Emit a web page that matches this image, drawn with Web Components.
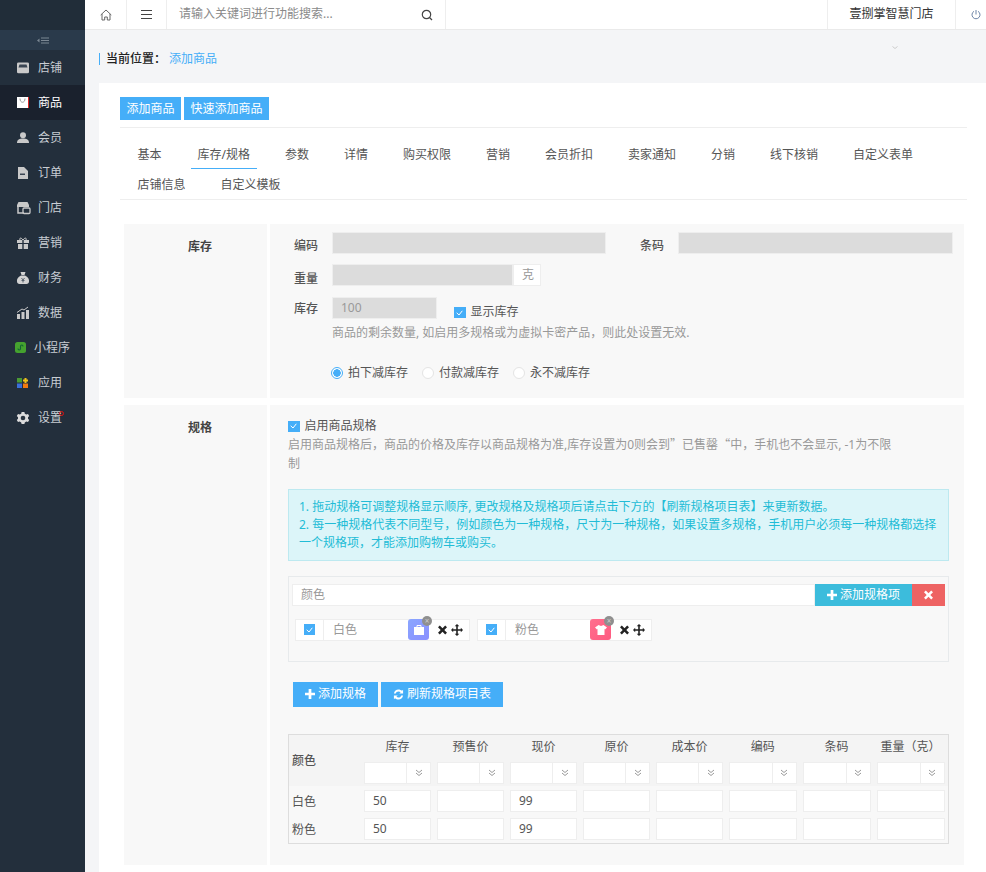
<!DOCTYPE html>
<html lang="zh"><head><meta charset="utf-8"><title>添加商品</title>
<style>
html,body{margin:0;height:872px;overflow:hidden;background:#f4f5f7}
body{font:12px/1.4 "Noto Sans","Noto Sans CJK SC",sans-serif;color:#555}
</style></head><body>
<app-shell></app-shell>
<script>
const ICONS={
shop:'<path fill="#c9c9c9" d="M1.500 0h9A1.500 1.500 0 0 1 12 1.500v9a1.500 1.500 0 0 1-1.500 1.500h-9A1.500 1.500 0 0 1 0 10.500v-9A1.500 1.500 0 0 1 1.500 0z" transform="translate(0 .5) scale(1 .9)"/><path fill="#3a4552" d="M2.500 2.500h7l1 3h-9z"/>',
goods:'<path fill="#fff" d="M0 0h11v11H0z"/><path fill="#d22" d="M11 0h1v11h-1z"/><path fill="none" stroke="#999" d="M3 1.500c0 5 5 5 5 0"/>',
user:'<circle cx="6" cy="3.200" r="3" fill="#c9c9c9"/><path fill="#c9c9c9" d="M0 11c0-3.500 2.500-4.500 6-4.500S12 7.500 12 11z"/>',
order:'<path fill="#c9c9c9" d="M1 0h6l4 4v8H1z"/><path fill="#3a4552" d="M3 6.500h5V8H3z"/>',
store:'<path fill="#c9c9c9" d="M1.500 0h9L12 3v2H0V3z"/><path fill="none" stroke="#c9c9c9" stroke-width="1.500" d="M1 5v6h6"/><rect x="6" y="6" width="7" height="5.500" rx="1" fill="none" stroke="#c9c9c9" stroke-width="1.300"/>',
gift:'<path fill="#c9c9c9" d="M0 3h5.300v3H0zM6.700 3H12v3H6.700zM1 7h4.300v5H1zM6.700 7H11v5H6.700z"/><path fill="none" stroke="#c9c9c9" d="M6 3C4 0 2 1 3 3M6 3c2-3 4-2 3 0"/>',
money:'<path fill="#d2d2d2" d="M3.500 0h5L7.500 3h-3zM4 3.500h4c3 1.500 4.500 4 4 6 0 1.500-1 2.500-2.500 2.500h-7C1 12 0 11 0 9.500-.5 7.500 1 5 4 3.500z"/><path fill="none" stroke="#56616c" d="M4.500 6 6 8l1.500-2M6 8v2.500M4.500 8.500h3"/>',
data:'<path fill="#c9c9c9" d="M0 7h3v5H0zM4.500 5h3v7h-3zM9 3h3v9H9z"/><path fill="none" stroke="#c9c9c9" d="M0 5.500 5 2l2 1 4-3"/>',
mini:'<rect width="11" height="11" rx="2.500" fill="#45a22f"/><path fill="none" stroke="#163" stroke-width="1.100" d="M3 6.500c0 2 2.500 2 2.500 0v-2c0-2 2.500-2 2.500 0"/>',
apps:'<rect x="0" y="1" width="5" height="4.500" fill="#4a9a35"/><path fill="#f2c21a" d="M7.500 1h2v1.500H11v2H9.500V6h-2V4.500H6v-2h1.500z"/><rect x="0" y="6.500" width="5" height="4.500" fill="#3b6fd8"/><rect x="6" y="6.500" width="5" height="4.500" fill="#f07a10"/>',
gear:'<path fill="#dcdcdc" d="M4.600 0h2.800l.4 1.700 1.500.8 1.700-.5 1.200 2.100-1.200 1.200v1.400L12.200 8 11 10l-1.700-.5-1.500.9-.4 1.600H4.600l-.4-1.600-1.500-.9L1 10-.2 8 1 6.700V5.300L-.2 4.100 1 2l1.700.5 1.500-.8z"/><circle cx="6" cy="6" r="2.300" fill="#2a3540"/>',
plus:'<path fill="currentColor" d="M4 0h3v4h4v3H7v4H4V7H0V4h4z"/>',
times:'<path fill="currentColor" d="M2 .5 5 3.500 8 .5 10 2.500 7 5.500 10 8.500 8 10.500 5 7.500 2 10.500 0 8.500 3 5.500 0 2.500z"/>',
arrows:'<path fill="currentColor" d="M6 0l2.300 2.300H6.800v3h3V3.800L12 6l-2.200 2.200V6.800h-3v3h1.500L6 12 3.700 9.800h1.500v-3h-3v1.400L0 6l2.200-2.200v1.500h3v-3H3.700z"/>',
refresh:'<path fill="currentColor" d="M1 5C1.500 2 3.500 .5 6 .5c1.500 0 2.800.6 3.800 1.500L11 .8V5H6.800l1.500-1.500C7.700 3 6.900 2.700 6 2.700 4.500 2.700 3.300 3.600 3 5zM11 7c-.5 3-2.500 4.500-5 4.500-1.500 0-2.800-.6-3.800-1.500L1 11.200V7h4.200l-1.500 1.500c.6.500 1.400.8 2.300.8 1.500 0 2.700-.9 3-2.300z"/>'
};
const svg=(n,w=12,h=12,vb='0 0 12 12')=>`<svg width="${w}" height="${h}" viewBox="${vb}" aria-hidden="true" style="display:block;flex:none;overflow:visible">${ICONS[n]}</svg>`;
function def(tag,css,html){
  customElements.define(tag,class extends HTMLElement{
    constructor(){super();this.attachShadow({mode:'open'});}
    connectedCallback(){const h=typeof html==='function'?html(this):html;this.shadowRoot.innerHTML=`<style>${css}</style>${h}`;}
  });
}
def('nav-item',`
:host{display:flex;align-items:center;height:35px;box-sizing:border-box;padding:1px 0 0 17px;color:#c8cdd3;font-size:12px}
:host([active]){background:#1a212d;color:#fff}
:host([tight]){padding-left:15px}
.l{margin-left:9px;position:relative;top:.5px}
:host([tight]) .l{margin-left:7px}
:host([dot]) .l::after{content:"";position:absolute;right:-2px;top:1px;width:3px;height:3px;border:1px solid #e01010;border-radius:50%}
`,e=>`${svg(e.getAttribute('icon'))}<span class="l"><slot></slot></span>`);
def('app-sidebar',`
:host{display:block;width:85px;flex:none;background:#232f3c;height:872px}
.t{height:30px;background:#212d39}
.c{height:20px;background:#2a3a4b;display:flex;align-items:center;justify-content:center}
`,`<div class="t"></div><div class="c"><svg width="12" height="7" viewBox="0 0 12 7"><path fill="#7b8793" d="M0 3.500 2.500 1.500v4zM4 .5h8v1H4zM4 3h8v1H4zM4 5.500h8v1H4z"/></svg></div>
<nav-item icon="shop">店铺</nav-item><nav-item icon="goods" active>商品</nav-item><nav-item icon="user">会员</nav-item><nav-item icon="order">订单</nav-item><nav-item icon="store">门店</nav-item><nav-item icon="gift">营销</nav-item><nav-item icon="money">财务</nav-item><nav-item icon="data">数据</nav-item><nav-item icon="mini" tight>小程序</nav-item><nav-item icon="apps">应用</nav-item><nav-item icon="gear" dot>设置</nav-item>`);
def('app-topbar',`
:host{display:flex;height:29px;background:#fff;border-bottom:1px solid #eaeaea;align-items:stretch;color:#555}
.b{display:flex;align-items:center;justify-content:center;border-right:1px solid #eee;box-sizing:content-box}
.home{width:41px}.menu{width:39px}
.s{width:254px;padding:0 12px;justify-content:space-between;color:#8a8a8a;font-size:12px;border-right:1px solid #eee}
.sp{flex:1;border-right:1px solid #eee}
.store{width:127px;color:#333;font-size:12px;border-right:1px solid #eee}
.p{width:30px;flex:none;display:flex;align-items:center;justify-content:center;padding-left:10px;box-sizing:border-box}
`,`<div class="b home"><svg width="12" height="12" viewBox="0 0 12 12" fill="none" stroke="#666"><path d="M.7 6 6 1l5.300 5M2 5v6h2.700V8h2.600v3H10V5"/></svg></div>
<div class="b menu"><svg width="11" height="9" viewBox="0 0 11 9"><path stroke="#444" d="M0 .5h11M0 4.500h11M0 8.500h11"/></svg></div>
<div class="b s"><span>请输入关键词进行功能搜索...</span><svg width="12" height="12" viewBox="0 0 12 12" fill="none" stroke="#444" stroke-width="1.200"><circle cx="5.500" cy="5.500" r="4.200"/><path d="M8.500 8.500 11 11"/></svg></div>
<div class="sp"></div><div class="b store">壹捌掌智慧门店</div>
<div class="p"><svg width="10" height="10" viewBox="0 0 10 10" fill="none" stroke="#6f86a8"><path d="M3 1.300a4 4 0 1 0 4 0M5 0v4.500"/></svg></div>`);
def('app-crumb',`
:host{display:flex;height:53px;box-sizing:border-box;align-items:center;padding:5px 0 0 14px;font-size:12px;color:#333;position:relative}
.bar{width:1px;height:12px;background:#45aef8;margin-right:6px}
b{font-weight:500;color:#222}
a{color:#45aef8;margin-left:3px}
svg{position:absolute;left:807px;top:16px}
`,`<span class="bar"></span><b>当前位置：</b><a>添加商品</a><svg width="6" height="3" viewBox="0 0 6 3"><path fill="none" stroke="#bbb" stroke-width=".7" d="M.5.500 3 2.500 5.500.5"/></svg>`);
def('x-btn',`
:host{display:inline-flex;align-items:center;justify-content:center;height:var(--h,23px);padding:1px 6.500px 0;background:var(--bg,#45aef8);color:#fff;font-size:12px;box-sizing:border-box;gap:3px;white-space:nowrap}
.i{display:flex;width:var(--iw,10px);justify-content:center;margin-top:-1px}
`,e=>{const n=e.getAttribute('icon');return `${n?`<span class="i">${n==='plus'?svg('plus',10,10,'0 0 11 11'):n==='refresh'?svg('refresh',11,11):svg('times',9,10,'0 0 10 11')}</span>`:''}<slot></slot>`});
def('x-tab',`
:host{display:block;height:30px;line-height:31px;padding:0 7px;margin:0 10.500px;box-sizing:border-box;color:#555;font-size:12px;white-space:nowrap}
:host([on]){border-bottom:1px solid #45aef8}
`,`<slot></slot>`);
def('x-tabs',`
:host{display:flex;flex-wrap:wrap;border-bottom:1px solid #eee;margin-top:11px;height:61px;box-sizing:border-box}
`,`<slot></slot>`);
def('x-section',`
:host{display:flex;margin:0 3px 7px 4px;gap:3px}
.l{width:143px;flex:none;background:#f8f8f8;text-align:center;font-weight:700;color:#444;font-size:12px;padding:var(--lt,14px) 0 0 9px;box-sizing:border-box}
.r{flex:1;background:#f8f8f8;min-width:0}
`,e=>`<div class="l">${e.getAttribute('label')}</div><div class="r"><slot></slot></div>`);
def('x-row',`
:host{display:flex;align-items:center;height:22px;margin-top:var(--mt,0);font-size:12px}
`,`<slot></slot>`);
def('x-label',`
:host{display:block;text-align:right;margin-right:14px;font-weight:500;color:#555;flex:none;width:var(--w,48px);padding-top:var(--pt,4px)}
`,`<slot></slot>`);
def('x-input',`
:host{display:block;box-sizing:border-box;height:22px;line-height:20px;border:1px solid #eee;background:var(--bg,#fff);color:var(--fg,#555);padding:0 var(--px,8px);font-size:12px;flex:none;width:var(--w,100%);white-space:nowrap;overflow:hidden}
:host([off]){background:#dcdcdc;color:#999}
`,`<slot></slot>`);
def('x-check',`
:host{display:flex;width:fit-content;align-items:center;gap:5px;font-size:12px;color:#555;flex:none}
i{display:flex;align-items:center;justify-content:center;width:11.500px;height:11.500px;background:#45aef8}
`,`<i><svg width="7" height="6" viewBox="0 0 7 6"><path fill="none" stroke="#fff" d="M.7 2.800 3 5 6.300.8"/></svg></i><slot></slot>`);
def('x-radio',`
:host{display:inline-flex;align-items:center;gap:5px;font-size:12px;color:#555;margin-right:14px}
i{display:block;box-sizing:border-box;width:12px;height:12px;border-radius:50%;border:1px solid #e4e4e4;background:#fff}
:host([on]) i{border-color:#45aef8;background:radial-gradient(circle,#45aef8 3.500px,#fff 4px)}
`,`<i></i><slot></slot>`);
def('spec-item',`
:host{display:flex;align-items:center;height:22px;box-sizing:border-box;border:1px solid #eee;background:#fff;color:#999;font-size:12px}
.c{width:27px;display:flex;justify-content:center;border-right:1px solid #eee;height:100%;align-items:center;background:#fff}
i{display:flex;align-items:center;justify-content:center;width:11px;height:11px;background:#45aef8}
.n{width:75px;padding-left:9px;line-height:20px}
.pic{width:21px;height:21px;border-radius:3px;position:relative;display:flex;align-items:center;justify-content:center}
.x{position:absolute;right:-3px;top:-3px;width:10px;height:10px;border-radius:50%;background:#8f8f8f;color:#ccc;font-size:8px;line-height:10px;text-align:center}
.a{display:flex;align-items:center;gap:4px;padding:0 6px 0 9px;color:#222}
`,e=>`<div class="c"><i><svg width="7" height="6" viewBox="0 0 7 6"><path fill="none" stroke="#fff" d="M.7 2.800 3 5 6.300.8"/></svg></i></div><div class="n">${e.getAttribute('name')}</div>
<div class="pic" style="background:${e.getAttribute('pic')}">${e.getAttribute('kind')==='bag'?'<svg width="12" height="10" viewBox="0 0 12 10"><path fill="#fff" d="M1 2h10v8H1z"/><path fill="none" stroke="#fff" d="M4 2V.5h4V2"/></svg>':'<svg width="12" height="10" viewBox="0 0 12 10"><path fill="#fff" d="M3.500 0 6 1 8.500 0 12 2.500 10 4.500 9.500 3.800V10h-7V3.800L2 4.500 0 2.500z"/></svg>'}<span class="x">×</span></div>
<div class="a">${svg('times',9,10,'0 0 10 11')}${svg('arrows',12,12)}</div>`);
def('sku-table',`
:host{display:grid;grid-template-columns:72px 73px 73px 73px 73px 73px 73.500px 74px 74px;border:1px solid #ddd;margin-top:27px;height:110px;box-sizing:border-box;grid-template-rows:27px 24px 28px 29px;font-size:12px;color:#555;background:#f8f8f8}
.h{background:#f4f4f4;text-align:center;padding-top:3px;line-height:18px;color:#555}
.f{grid-row:span 2;text-align:left;padding:17px 0 0 3px;font-weight:500;line-height:18px}
.s{background:#f4f4f4;padding:0 3px;display:flex;align-items:flex-start}
.a{flex:1;height:22px;box-sizing:border-box;background:#fff;border:1px solid #eee;min-width:0}
.b{width:24px;height:22px;box-sizing:border-box;background:#fff;border:1px solid #eee;border-left:0;display:flex;align-items:center;justify-content:center;flex:none}
.n{padding:5px 0 0 3px;line-height:22px}
.c{padding:4px 3px 0}
.i{height:22px;box-sizing:border-box;background:#fff;border:1px solid #eee;padding-left:8px;line-height:20px;font-size:12px}
`,()=>{
 const heads=['库存','预售价','现价','原价','成本价','编码','条码','重量（克）'];
 const chev='<svg width="8" height="8" viewBox="0 0 8 8" fill="none" stroke="#999"><path d="M1 1l3 2.500L7 1M1 4l3 2.500L7 4"/></svg>';
 let h='<div class="h f">颜色</div>'+heads.map(t=>`<div class="h">${t}</div>`).join('');
 h+=heads.map(()=>`<div class="s"><div class="a"></div><div class="b">${chev}</div></div>`).join('');
 for(const n of ['白色','粉色']){
  h+=`<div class="n">${n}</div>`+heads.map((_,i)=>`<div class="c"><div class="i">${i===0?'50':i===2?'99':''}</div></div>`).join('');
 }
 return h;
});
def('stock-section',`
:host{display:block}
.w{padding:8px 11px 0 0;height:174px;box-sizing:border-box}
.help{color:#999;margin:4px 0 0 62px;line-height:19px;font-size:12px}
.radios{margin:23px 0 0 61px;display:flex;align-items:center}
x-check{align-self:flex-end;margin:0 0 -2px 17px}
`,`<div class="w">
<x-row><x-label style="--pt:6px">编码</x-label><x-input off style="--w:274px"></x-input><x-label style="--w:58px;--pt:6px">条码</x-label><x-input off style="--w:275px"></x-input></x-row>
<x-row style="--mt:10px"><x-label style="--pt:8px">重量</x-label><x-input off style="--w:181px"></x-input><x-input style="--w:28px;--fg:#999">克</x-input></x-row>
<x-row style="--mt:11px"><x-label style="--pt:3px">库存</x-label><x-input off style="--w:105px">100</x-input><x-check>显示库存</x-check></x-row>
<div class="help">商品的剩余数量, 如启用多规格或为虚拟卡密产品，则此处设置无效.</div>
<div class="radios"><x-radio on>拍下减库存</x-radio><x-radio>付款减库存</x-radio><x-radio>永不减库存</x-radio></div>
</div>`);
def('spec-section',`
:host{display:block}
.w{padding:13px 15px 0 18px;height:460px;box-sizing:border-box}
.help{color:#999;line-height:19px;margin-top:-1px;max-width:620px}
.q{font-family:"Noto Sans CJK SC",sans-serif}
.alert{margin-top:16px;padding:8px 10px;border:1px solid #bde9f0;background:#dcf5f9;color:#22bcd6;line-height:18px}
.box{margin-top:15px;border:1px solid #e7eaec;height:86px;box-sizing:border-box;padding:7px 3px 0}
.top{display:flex;height:22px}
.top x-input{flex:1;width:auto;--px:8px;--fg:#999;--w:auto}
.items{display:flex;gap:7px;margin:13px 0 0 3px}
.btns{display:flex;gap:3px;margin:20px 0 0 5px}
.btns x-btn{--h:25px;padding:1px 12px 0}
.top x-btn{--h:22px;padding:1px 0 0;width:97px}
`,`<div class="w">
<x-check>启用商品规格</x-check>
<div class="help">启用商品规格后，商品的价格及库存以商品规格为准,库存设置为0则会到<span class="q">”</span>已售罄<span class="q">“</span>中，手机也不会显示, -1为不限<br>制</div>
<div class="alert">1. 拖动规格可调整规格显示顺序, 更改规格及规格项后请点击下方的【刷新规格项目表】来更新数据。<br>2. 每一种规格代表不同型号，例如颜色为一种规格，尺寸为一种规格，如果设置多规格，手机用户必须每一种规格都选择<br>一个规格项，才能添加购物车或购买。</div>
<div class="box"><div class="top"><x-input>颜色</x-input><x-btn icon="plus" style="--bg:#3cbcdc">添加规格项</x-btn><x-btn icon="times" style="--bg:#ee6363;width:33px"></x-btn></div>
<div class="items"><spec-item name="白色" kind="bag" pic="linear-gradient(135deg,#8aa6ff,#8b90ff)"></spec-item><spec-item name="粉色" kind="tee" pic="linear-gradient(135deg,#ff6f8e,#fe5a80)"></spec-item></div></div>
<div class="btns"><x-btn icon="plus">添加规格</x-btn><x-btn icon="refresh" style="--iw:11px">刷新规格项目表</x-btn></div>
<sku-table></sku-table>
</div>`);
def('goods-panel',`
:host{display:block;background:#fff;margin-left:14px;padding:14px 19px 0 21px;height:789px;box-sizing:border-box}
.a{display:flex;gap:3px}
hr{border:0;border-top:1px solid #eee;margin:7px 0 0}
.sec{margin-top:24px}
`,`<div class="a"><x-btn>添加商品</x-btn><x-btn>快速添加商品</x-btn></div><hr>
<x-tabs><x-tab style="margin-right:11.500px">基本</x-tab><x-tab on>库存/规格</x-tab><x-tab>参数</x-tab><x-tab>详情</x-tab><x-tab>购买权限</x-tab><x-tab>营销</x-tab><x-tab>会员折扣</x-tab><x-tab>卖家通知</x-tab><x-tab>分销</x-tab><x-tab>线下核销</x-tab><x-tab>自定义表单</x-tab><x-tab>店铺信息</x-tab><x-tab>自定义模板</x-tab></x-tabs>
<div class="sec"><x-section label="库存" style="--lt:15px"><stock-section></stock-section></x-section><x-section label="规格" style="--lt:15px"><spec-section></spec-section></x-section></div>`);
def('app-shell',`
:host{display:flex;height:872px;overflow:hidden}
main{flex:1;min-width:0}
`,`<app-sidebar></app-sidebar><main><app-topbar></app-topbar><app-crumb></app-crumb><goods-panel></goods-panel></main>`);
</script>
</body></html>
